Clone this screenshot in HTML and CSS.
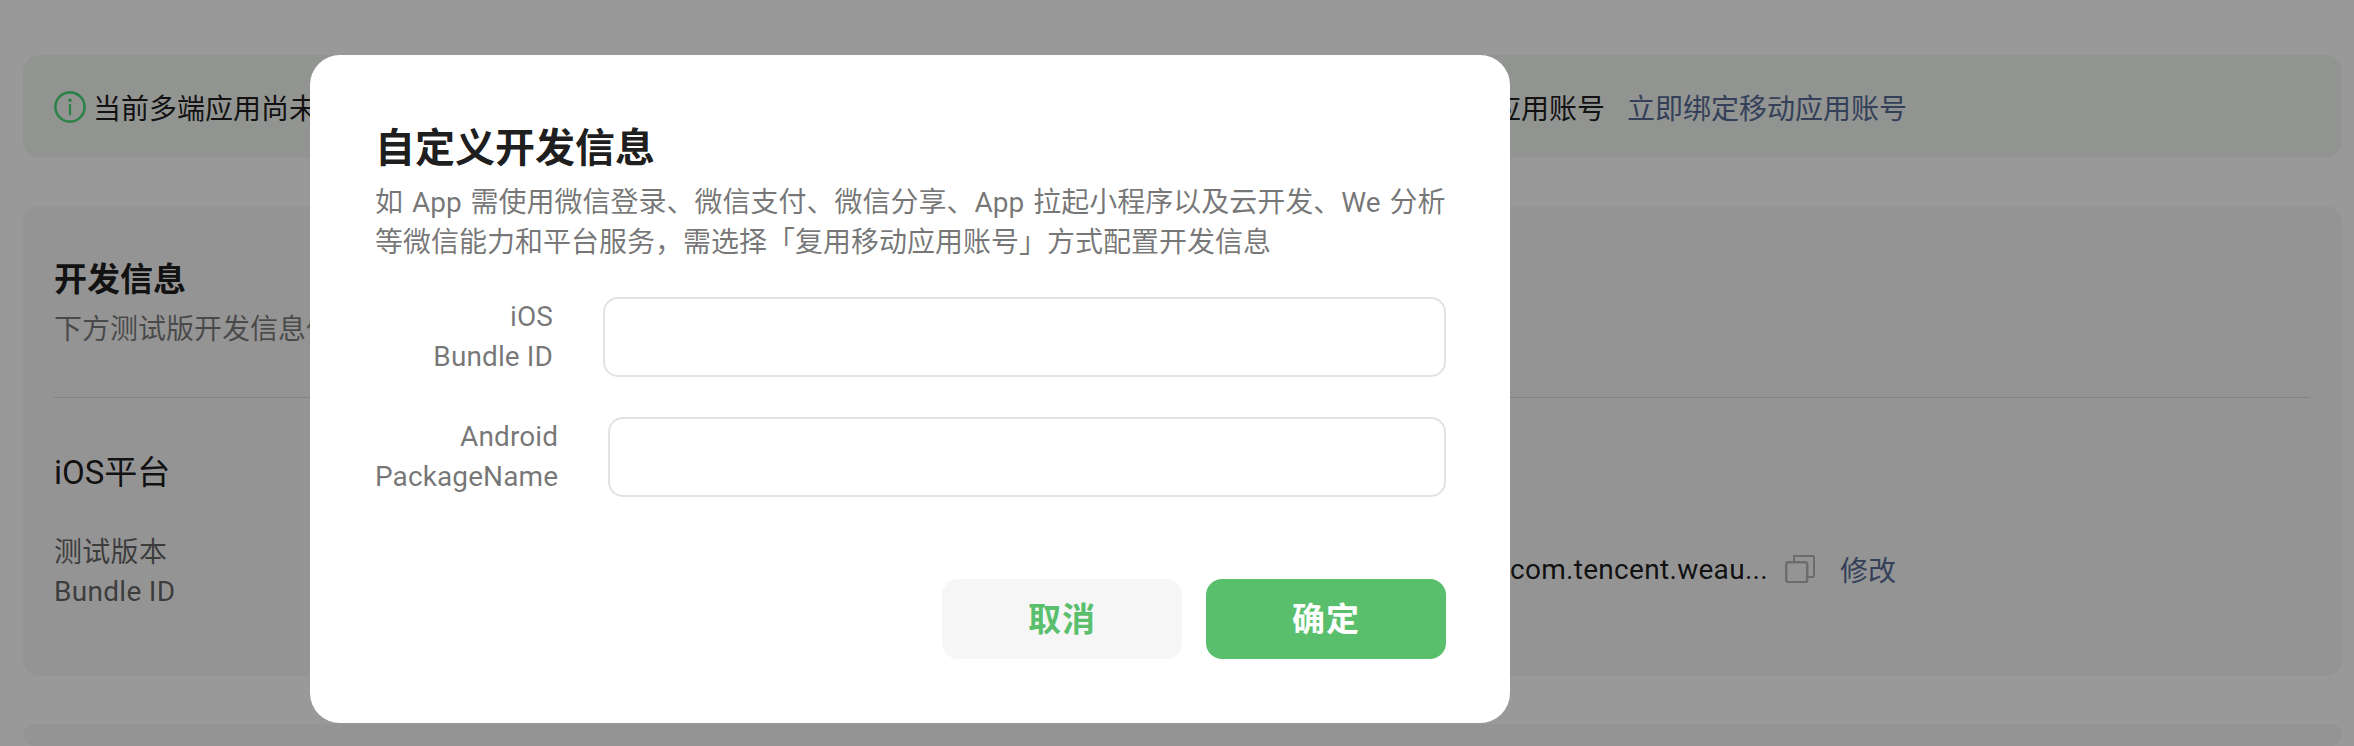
FILE: index.html
```html
<!DOCTYPE html>
<html lang="zh-CN">
<head>
<meta charset="utf-8">
<title>开发信息</title>
<link rel="stylesheet" href="styles.css">
</head>
<body>
<main class="page">
  <section class="alert">
    <svg class="alert-icon" viewBox="0 0 32 32" aria-hidden="true"><circle cx="16" cy="16" r="14.6" fill="none" stroke="currentColor" stroke-width="2.6"/><circle cx="16" cy="9.2" r="1.7" fill="currentColor"/><rect x="14.9" y="13" width="2.2" height="11.2" fill="currentColor"/></svg>
    <span class="alert-text">当前多端应用尚未绑定移动应用账号，部分微信能力和平台服务暂不可用，如需使用这些能力和服务请先绑定移动应用账号</span>
    <a class="link alert-link">立即绑定移动应用账号</a>
  </section>
  <section class="card">
    <header class="card-head">
      <h2 class="card-title">开发信息</h2>
      <p class="card-sub">下方测试版开发信息仅</p>
    </header>
    <div class="platform">
      <h3 class="card-title">iOS平台</h3>
      <div class="platform-row">
        <div class="field-name">测试版本<br>Bundle ID</div>
        <div class="field-value">
          <span class="value-text">com.tencent.weau...</span>
          <svg class="copy-icon" viewBox="0 0 30 28" aria-hidden="true"><path d="M9 6V1h19a1 1 0 0 1 1 1v19a1 1 0 0 1-1 1h-6" fill="none" stroke="currentColor" stroke-width="2"/><rect x="1.2" y="7.2" width="21" height="20" rx="2" fill="none" stroke="currentColor" stroke-width="2.4"/></svg>
          <a class="link edit-link">修改</a>
        </div>
      </div>
    </div>
  </section>
  <section class="card card-next"></section>
</main>
<div class="overlay">
  <div class="modal">
    <h1 class="modal-title">自定义开发信息</h1>
    <p class="modal-desc">如 App 需使用微信登录、微信支付、微信分享、App 拉起小程序以及云开发、We 分析等微信能力和平台服务，需选择「复用移动应用账号」方式配置开发信息</p>
    <div class="form">
      <div class="form-row">
        <label class="form-label">iOS<br>Bundle ID</label>
        <input class="form-input" type="text">
      </div>
      <div class="form-row">
        <label class="form-label">Android<br>PackageName</label>
        <input class="form-input" type="text">
      </div>
    </div>
    <div class="actions">
      <button class="btn btn-cancel" type="button">取消</button>
      <button class="btn btn-ok" type="button">确定</button>
    </div>
  </div>
</div>
</body>
</html>
```
FILE: styles.css
```css
* { box-sizing: border-box; }
html, body { margin: 0; height: 100%; overflow: hidden; }
body {
  background: #fff;
  color: rgba(0, 0, 0, .9);
  font-family: Roboto, "Noto Sans CJK SC", sans-serif;
  font-size: 28px;
}
.page { height: 100vh; overflow: hidden; padding: 55px 12px 0 23px; display: flex; flex-direction: column; gap: 48px; }
.alert {
  height: 103px;
  padding: 0 32px 0 31px;
  background: #f3f7f3;
  border-radius: 16px;
  display: flex;
  align-items: center;
  flex: none;
}
.alert-icon { width: 32px; height: 32px; color: #4bd97a; flex: none; margin-right: 7px; }
.alert-text { flex: none; white-space: nowrap; }
.alert-link { margin-left: 22px; white-space: nowrap; }
.link { color: #576b95; }
.card { background: #f7f7f7; border-radius: 16px; height: 470px; padding: 0 32px 0 31px; flex: none; }
.card-head { height: 192px; padding-top: 52px; border-bottom: 1px solid rgba(0,0,0,.1); }
.card-title { margin: 0; font-size: 33px; line-height: 44px; font-weight: 600; }
.platform .card-title { font-weight: 400; }
.card-sub { margin: 8px 0 0; color: rgba(0,0,0,.5); line-height: 40px; white-space: nowrap; }
.platform { padding-top: 53px; }
.platform-row { display: flex; justify-content: space-between; margin-top: 38px; }
.field-name { color: rgba(0,0,0,.6); line-height: 39px; letter-spacing: .3px; }
.field-value { display: flex; align-items: center; height: 40px; padding-right: 414px; margin-top: 16px; }
.value-text { width: 255px; margin-right: 20px; white-space: nowrap; letter-spacing: .3px; }
.copy-icon { width: 30px; height: 28px; color: #b5b5b5; margin-right: 25px; }
.card-next { flex: 1; height: auto; }

.overlay { position: fixed; inset: 0; background: rgba(0,0,0,.4); }
.modal {
  position: absolute;
  left: 310px;
  top: 55px;
  width: 1200px;
  height: 668px;
  padding: 69px 64px 0 65px;
  background: #fff;
  border-radius: 30px;
}
.modal-title { margin: 0; font-size: 40px; line-height: 50px; font-weight: 600; }
.modal-desc { margin: 9px 0 0; line-height: 40px; color: rgba(0,0,0,.55); word-spacing: 2px; }
.form { margin-top: 34px; display: flex; flex-direction: column; gap: 40px; }
.form-row { display: flex; gap: 50px; align-items: center; }
.form-label { min-width: 178px; text-align: right; line-height: 40px; color: rgba(0,0,0,.55); flex: none; letter-spacing: .1px; }
.form-input { flex: 1; min-width: 0; height: 80px; border: 2px solid #e2e2e2; border-radius: 15px; background: #fff; outline: none; }
.actions { margin-top: 82px; display: flex; justify-content: flex-end; gap: 24px; }
.btn { width: 240px; height: 80px; padding: 0 0 4px; border: 0; border-radius: 16px; font-family: inherit; font-size: 33px; font-weight: 600; letter-spacing: 1px; }
.btn-cancel { background: #f6f6f6; color: #5abf6d; }
.btn-ok { background: #5abf6d; color: #fff; }
```
